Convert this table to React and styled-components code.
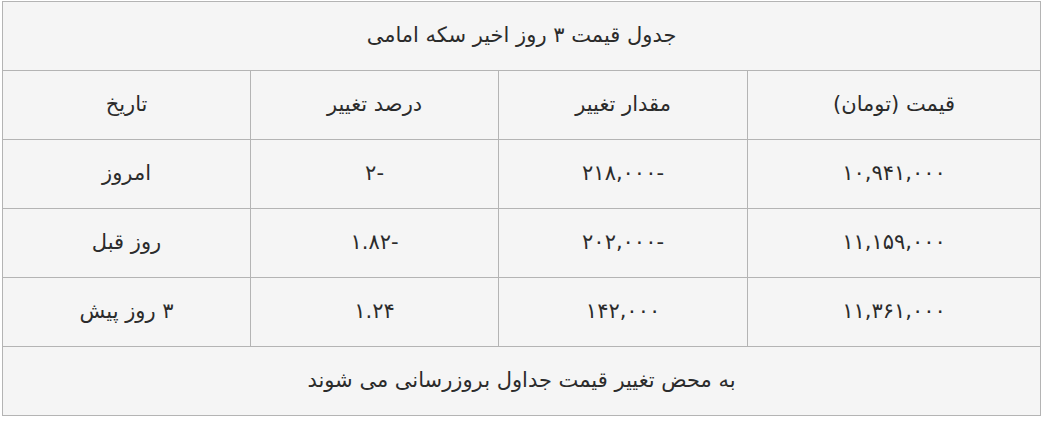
import { createGlobalStyle, styled } from 'styled-components';

const GlobalStyle = createGlobalStyle`
  html, body {
    margin: 0;
    padding: 0;
    background: #ffffff;
  }
`;

const Page = styled.div`
  padding: 1px 1px 0 2px;
  font-family: "DejaVu Sans", "Noto Sans", sans-serif;
`;

const Table = styled.table`
  width: 1038px;
  border-collapse: collapse;
  table-layout: fixed;
  direction: rtl;
  background-color: #f5f5f5;
  color: #2b2b2b;
  font-size: 21px;
`;

const Col = styled.col`
  width: ${props => props.$width}px;
`;

const Cell = styled.td`
  height: 68px;
  padding: 0 10px;
  border: 1px solid #b4b4b4;
  text-align: center;
  vertical-align: middle;
  font-weight: normal;
  line-height: 1.4;
`;

const HeadCell = styled(Cell).attrs({ as: 'th' })``;

const columns = [293, 249, 248, 248];

const headers = ['قیمت (تومان)', 'مقدار تغییر', 'درصد تغییر', 'تاریخ'];

const rows = [
  ['۱۰,۹۴۱,۰۰۰', '-۲۱۸,۰۰۰', '-۲', 'امروز'],
  ['۱۱,۱۵۹,۰۰۰', '-۲۰۲,۰۰۰', '-۱.۸۲', 'روز قبل'],
  ['۱۱,۳۶۱,۰۰۰', '۱۴۲,۰۰۰', '۱.۲۴', '۳ روز پیش'],
];

const App = () => {
  return (
    <>
      <GlobalStyle />
      <Page>
        <Table>
          <colgroup>
            {columns.map((w, i) => <Col key={i} $width={w} />)}
          </colgroup>
          <tbody>
            <tr>
              <Cell colSpan={4}>جدول قیمت ۳ روز اخیر سکه امامی</Cell>
            </tr>
            <tr>
              {headers.map(h => <HeadCell key={h}>{h}</HeadCell>)}
            </tr>
            {rows.map((row, i) => (
              <tr key={i}>
                {row.map((v, j) => <Cell key={j}>{v}</Cell>)}
              </tr>
            ))}
            <tr>
              <Cell colSpan={4}>به محض تغییر قیمت جداول بروزرسانی می شوند</Cell>
            </tr>
          </tbody>
        </Table>
      </Page>
    </>
  );
};

export default App;
